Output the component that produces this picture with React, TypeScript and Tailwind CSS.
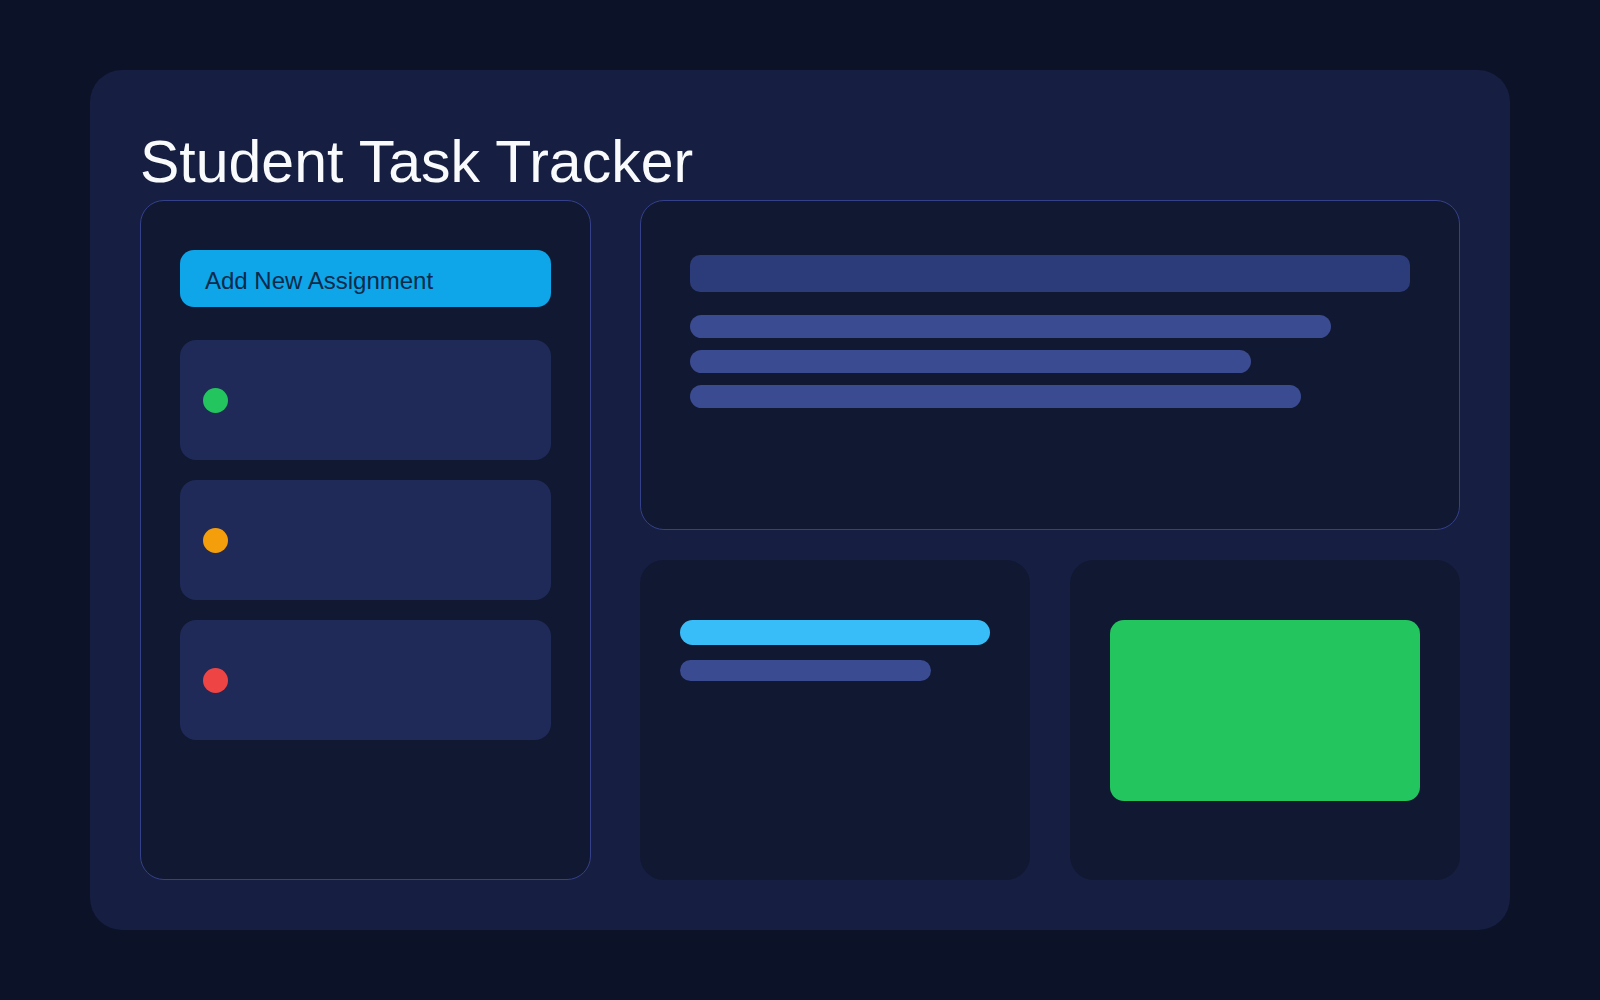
const TASKS = [
  { id: 'done', dot: 'bg-[#22c55e]' },
  { id: 'pending', dot: 'bg-[#f59e0b]' },
  { id: 'overdue', dot: 'bg-[#ef4444]' },
]

// placeholder text lines in the details card
const DETAIL_LINES = ['w-[641px]', 'w-[561px]', 'w-[611px]']

function TaskList() {
  return (
    <div className="row-span-2 flex flex-col rounded-3xl border border-[#34418a] bg-[#111831] px-[39px] pt-[49px]">
      <button className="h-[57px] rounded-[14px] bg-[#0ea5e9] pl-[25px] pt-[17px] pb-[13px] text-left text-[24px] leading-[27px] text-[#0c2a4a]">
        Add New Assignment
      </button>
      <div className="mt-[33px] flex flex-col gap-5">
        {TASKS.map(t => (
          <div key={t.id} className="flex h-[120px] items-center rounded-2xl bg-[#1f2a58] pl-[23px]">
            <span className={`h-[25px] w-[25px] rounded-full ${t.dot}`} />
          </div>
        ))}
      </div>
    </div>
  )
}

function DetailsCard() {
  return (
    <div className="flex h-[330px] flex-col rounded-3xl border border-[#34418a] bg-[#111831] px-[49px] pt-[54px]">
      <div className="h-[37px] w-full rounded-[10px] bg-[#2c3c7a]" />
      <div className="mt-[23px] flex flex-col gap-[12px]">
        {DETAIL_LINES.map(w => (
          <div key={w} className={`h-[23px] rounded-full bg-[#3b4b91] ${w}`} />
        ))}
      </div>
    </div>
  )
}

function ProgressCard() {
  return (
    <div className="flex h-[320px] flex-col rounded-3xl bg-[#111831] px-10 pt-[60px]">
      <div className="h-[25px] w-full rounded-full bg-[#38bdf8]" />
      <div className="mt-[15px] h-[21px] w-[251px] rounded-full bg-[#3b4b91]" />
    </div>
  )
}

function StatusCard() {
  return (
    <div className="flex h-[320px] flex-col rounded-3xl bg-[#111831] px-10 pt-[60px]">
      <div className="h-[181px] w-full rounded-[14px] bg-[#22c55e]" />
    </div>
  )
}

export default function App() {
  return (
    <div className="min-h-screen w-full bg-[#0c1228] px-[90px] py-[70px] font-['Liberation_Sans',Arial,sans-serif]">
      <div className="h-[860px] rounded-[32px] bg-[#161e42] px-[50px] pt-[55px]">
        <h1 className="h-[75px] text-[59px] leading-[75px] text-[#f8fafc]">Student Task Tracker</h1>
        <div className="grid grid-cols-[451px_1fr] grid-rows-[330px_320px] gap-x-[49px] gap-y-[30px]">
          <TaskList />
          <DetailsCard />
          <div className="grid grid-cols-2 gap-10">
            <ProgressCard />
            <StatusCard />
          </div>
        </div>
      </div>
    </div>
  )
}
